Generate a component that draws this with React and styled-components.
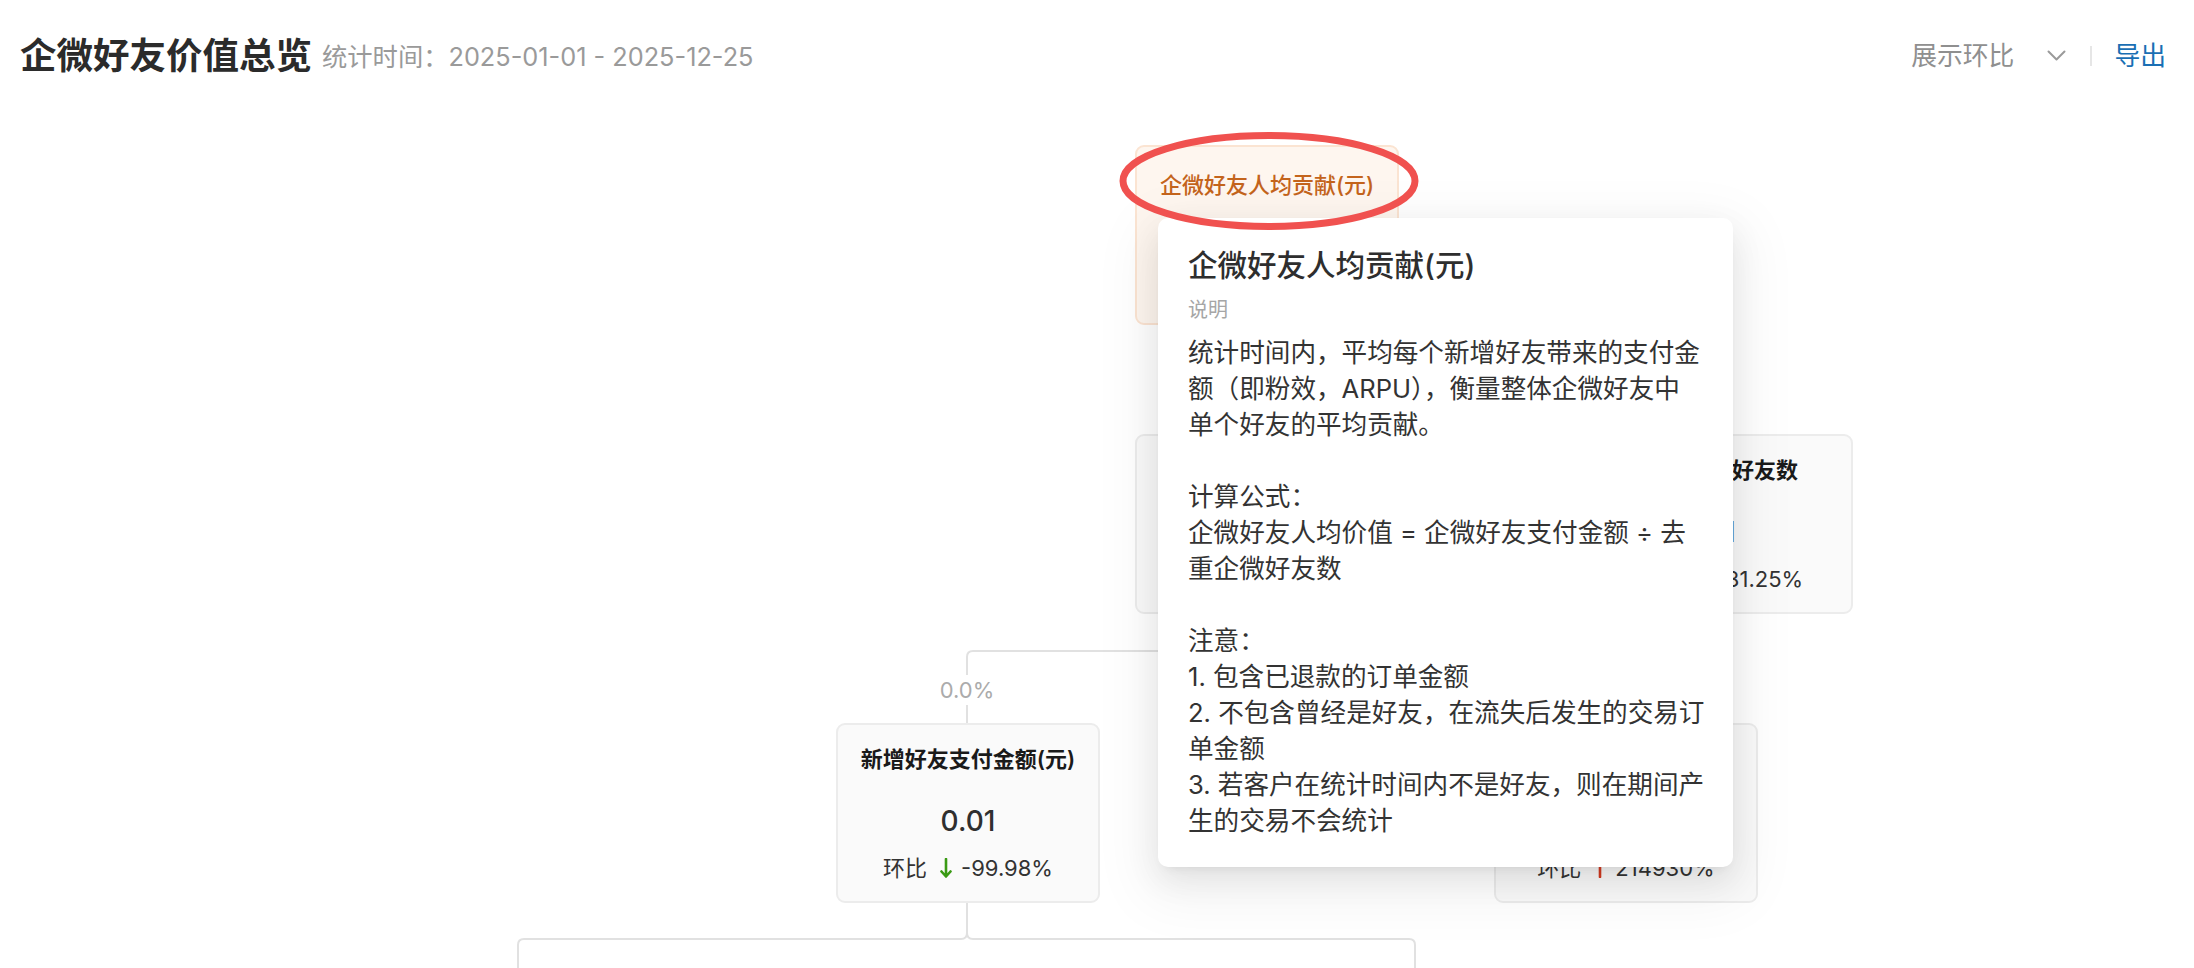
import React from "react";
import styled, { createGlobalStyle, css } from "styled-components";

const FONT = `"Inter", "Noto Sans CJK SC", sans-serif`;

const GlobalStyle = createGlobalStyle`
  html, body { margin: 0; padding: 0; background: #fff; }
  body { font-family: ${FONT}; color: #333; overflow: hidden; -webkit-font-smoothing: antialiased; }
  *, *::before, *::after { box-sizing: border-box; }
`;

const Page = styled.div`
  width: 2194px;
  height: 968px;
  display: flex;
  flex-direction: column;
  overflow: hidden;
  background: #fff;
`;

const Header = styled.header`
  flex: none;
  height: 112px;
  display: flex;
  align-items: center;
  justify-content: space-between;
  padding: 0 28px 0 20px;
`;

const TitleGroup = styled.div`
  display: flex;
  align-items: center;
  gap: 10px;
`;

const PageTitle = styled.h1`
  margin: 0;
  font-size: 36.5px;
  line-height: 44px;
  font-weight: 600;
  color: #2b2b2b;
`;

const Period = styled.span`
  font-size: 25.3px;
  line-height: 44px;
  color: #9a9a9a;
  padding-top: 2px;
`;

const Actions = styled.div`
  display: flex;
  align-items: center;
`;

const CompareSelect = styled.div`
  display: flex;
  align-items: center;
  gap: 33px;
  font-size: 25.8px;
  line-height: 36px;
  color: #8f8f8f;
  cursor: pointer;
`;

const VDivider = styled.span`
  width: 2px;
  height: 20px;
  background: #e6e6e6;
  margin: 0 22px 0 24px;
`;

const ExportLink = styled.a`
  font-size: 25.8px;
  line-height: 36px;
  color: #1a6fb4;
  cursor: pointer;
`;

const Canvas = styled.div`
  position: relative;
  flex: 1;
  overflow: hidden;
`;

const Links = styled.svg`
  position: absolute;
  left: 0;
  top: 0;
  overflow: visible;
`;

const LinkLabel = styled.span`
  position: absolute;
  left: ${(p) => p.$x}px;
  top: ${(p) => p.$y}px;
  transform: translate(-50%, -50%);
  background: #fff;
  padding: 3px 0;
  font-size: 22px;
  line-height: 24px;
  color: #ababab;
  white-space: nowrap;
`;

const NodeCard = styled.div`
  position: absolute;
  left: ${(p) => p.$x}px;
  top: ${(p) => p.$y}px;
  width: 264px;
  height: 180px;
  display: flex;
  flex-direction: column;
  align-items: center;
  padding-top: 18px;
  border-radius: 9px;
  border: 2px solid #ececec;
  background: #fafafa;
  ${(p) =>
    p.$active &&
    css`
      background: #fef6ef;
      border-color: #fbe4d2;
      padding-top: 22px;
    `}
`;

const NodeTitle = styled.div`
  font-size: 22px;
  line-height: 32px;
  font-weight: 600;
  color: #1a1a1a;
  white-space: nowrap;
  ${(p) =>
    p.$active &&
    css`
      color: #c4641c;
      font-weight: 500;
    `}
`;

const NodeValue = styled.div`
  margin-top: 26px;
  font-size: 28px;
  line-height: 40px;
  font-weight: 500;
  color: #2f2f2f;
`;

const Ratio = styled.div`
  margin-top: 11px;
  display: flex;
  align-items: center;
  font-size: 22px;
  line-height: 32px;
  color: #333;
  white-space: nowrap;
`;

const RatioLabel = styled.span`
  margin-right: 13px;
`;

const RatioValue = styled.span`
  margin-left: 9px;
`;

const ArrowSvg = styled.svg`
  flex: none;
  color: ${(p) => (p.$up ? "#d43b21" : "#3a9a14")};
`;

const Tooltip = styled.div`
  position: absolute;
  left: 1158px;
  top: 106px;
  width: 575px;
  padding: 26px 30px 28px;
  background: #fff;
  border-radius: 10px;
  box-shadow: 0 12px 32px rgba(0, 0, 0, 0.08), 0 6px 12px -8px rgba(0, 0, 0, 0.12),
    0 18px 56px 16px rgba(0, 0, 0, 0.05);
`;

const TipTitle = styled.div`
  font-size: 29.5px;
  line-height: 42px;
  font-weight: 500;
  color: #2e2e2e;
  white-space: nowrap;
`;

const TipLabel = styled.div`
  margin-top: 10px;
  font-size: 20px;
  line-height: 28px;
  color: #a6a6a6;
`;

const TipBody = styled.div`
  margin-top: 11px;
  font-size: 25.6px;
  line-height: 36px;
  color: #333;
`;

const TipLine = styled.div`
  height: 36px;
  white-space: nowrap;
`;

const Highlight = styled.svg`
  position: absolute;
  left: 1116px;
  top: 20px;
  overflow: visible;
  pointer-events: none;
`;

const nodes = [
  { id: "root", x: 1135, y: 33, title: "企微好友人均贡献(元)", value: "0.00", up: false, ratio: "-100.00%", active: true },
  { id: "a", x: 1135, y: 322, title: "企微好友支付金额(元)", value: "21493.01", up: true, ratio: "52.11%" },
  { id: "b", x: 1589, y: 322, title: "去重企微好友数", value: "41", up: true, ratio: "181.25%" },
  { id: "n", x: 836, y: 611, title: "新增好友支付金额(元)", value: "0.01", up: false, ratio: "-99.98%" },
  { id: "c", x: 1494, y: 611, title: "存量好友支付金额(元)", value: "21493.00", up: true, ratio: "214930%" },
];

const linkPaths = [
  "M1267 213 V322",
  "M1721 322 V255 Q1721 249 1715 249 H1273 Q1267 249 1267 243",
  "M967 611 V545 Q967 539 973 539 H1261 Q1267 539 1267 533 V502",
  "M1626 611 V545 Q1626 539 1620 539 H1273 Q1267 539 1267 533",
  "M518 960 V833 Q518 827 524 827 H961 Q967 827 967 821 V791",
  "M1415 960 V833 Q1415 827 1409 827 H973 Q967 827 967 821",
];

const tipLines = [
  "统计时间内，平均每个新增好友带来的支付金",
  "额（即粉效，ARPU），衡量整体企微好友中",
  "单个好友的平均贡献。",
  "",
  "计算公式：",
  "企微好友人均价值 = 企微好友支付金额 ÷ 去",
  "重企微好友数",
  "",
  "注意：",
  "1. 包含已退款的订单金额",
  "2. 不包含曾经是好友，在流失后发生的交易订",
  "单金额",
  "3. 若客户在统计时间内不是好友，则在期间产",
  "生的交易不会统计",
];

function TrendArrow({ up }) {
  return (
    <ArrowSvg $up={up} width="12" height="20" viewBox="0 0 12 20" fill="none">
      {up ? (
        <path d="M6 19 V2 M1.5 6.5 L6 1.5 L10.5 6.5" stroke="currentColor" strokeWidth="2.6" strokeLinecap="round" strokeLinejoin="round" />
      ) : (
        <path d="M6 1 V18 M1.5 13.5 L6 18.5 L10.5 13.5" stroke="currentColor" strokeWidth="2.6" strokeLinecap="round" strokeLinejoin="round" />
      )}
    </ArrowSvg>
  );
}

function Node({ node }) {
  return (
    <NodeCard $x={node.x} $y={node.y} $active={node.active}>
      <NodeTitle $active={node.active}>{node.title}</NodeTitle>
      <NodeValue>{node.value}</NodeValue>
      <Ratio>
        <RatioLabel>环比</RatioLabel>
        <TrendArrow up={node.up} />
        <RatioValue>{node.ratio}</RatioValue>
      </Ratio>
    </NodeCard>
  );
}

export default function App() {
  return (
    <>
      <GlobalStyle />
      <Page>
        <Header>
          <TitleGroup>
            <PageTitle>企微好友价值总览</PageTitle>
            <Period>统计时间：2025-01-01 - 2025-12-25</Period>
          </TitleGroup>
          <Actions>
            <CompareSelect>
              <span>展示环比</span>
              <svg width="19" height="12" viewBox="0 0 19 12" fill="none">
                <path d="M1.5 1.5 L9.5 9.5 L17.5 1.5" stroke="#9a9a9a" strokeWidth="2" strokeLinecap="round" strokeLinejoin="round" />
              </svg>
            </CompareSelect>
            <VDivider />
            <ExportLink>导出</ExportLink>
          </Actions>
        </Header>
        <Canvas>
          <Links width="2194" height="856" viewBox="0 0 2194 856" fill="none">
            {linkPaths.map((d, i) => (
              <path key={i} d={d} stroke="#e1e1e1" strokeWidth="2" fill="none" />
            ))}
          </Links>
          <LinkLabel $x={967} $y={578}>0.0%</LinkLabel>
          {nodes.map((n) => (
            <Node key={n.id} node={n} />
          ))}
          <Tooltip>
            <TipTitle>企微好友人均贡献(元)</TipTitle>
            <TipLabel>说明</TipLabel>
            <TipBody>
              {tipLines.map((l, i) => (
                <TipLine key={i}>{l}</TipLine>
              ))}
            </TipBody>
          </Tooltip>
          <Highlight width="306" height="98" viewBox="0 0 306 98" fill="none">
            <ellipse cx="153" cy="49" rx="146" ry="45.5" stroke="#f0514f" strokeWidth="7" />
          </Highlight>
        </Canvas>
      </Page>
    </>
  );
}
